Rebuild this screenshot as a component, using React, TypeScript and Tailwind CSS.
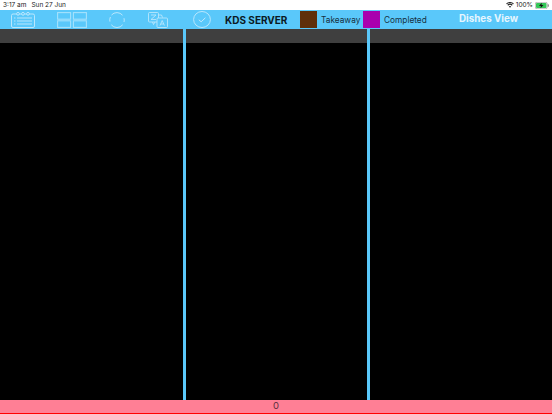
import React from "react";

const stroke = "#c4eafd";

function ListIcon() {
  return (
    <svg width="24" height="16" viewBox="0 0 24 16" fill="none" stroke={stroke} strokeWidth="0.9">
      <rect x="0.5" y="2" width="23" height="13.5" rx="1.5" />
      <circle cx="7" cy="1.8" r="1.4" fill="#5ac8fa" />
      <circle cx="12" cy="1.8" r="1.4" fill="#5ac8fa" />
      <circle cx="17" cy="1.8" r="1.4" fill="#5ac8fa" />
      <path d="M3 6h1.5M6 6h15M3 9h1.5M6 9h15M3 12h1.5M6 12h15" />
    </svg>
  );
}

function GridIcon() {
  return (
    <svg width="30" height="16" viewBox="0 0 30 16" fill="none" stroke="#a5e1fc" strokeWidth="1.1">
      <rect x="0.6" y="0.6" width="13" height="6.6" />
      <rect x="16.4" y="0.6" width="13" height="6.6" />
      <rect x="0.6" y="8.8" width="13" height="6.6" />
      <rect x="16.4" y="8.8" width="13" height="6.6" />
    </svg>
  );
}

function SyncIcon() {
  return (
    <svg width="16" height="16" viewBox="0 0 16 16" fill="none" stroke={stroke} strokeWidth="0.9">
      <path d="M2.5 3A7.3 7.3 0 0 1 13.5 3.2" />
      <path d="M13.7 12.8A7.3 7.3 0 0 1 2.3 12.8" />
      <path d="M0.9 9.6A7.3 7.3 0 0 1 1.4 5" />
      <path d="M15 6.2A7.3 7.3 0 0 1 15 10" />
    </svg>
  );
}

function TranslateIcon() {
  return (
    <svg width="20" height="16" viewBox="0 0 20 16" fill="none" stroke={stroke} strokeWidth="0.8">
      <rect x="0.5" y="0.5" width="10" height="9.5" rx="1" />
      <path d="M3 3h5L3 7.5h5" />
      <path d="M10.5 3h3l1 2.5" />
      <rect x="9" y="6" width="10.5" height="9.5" rx="1" fill="#5ac8fa" />
      <path d="M12 13.5L14.2 8.5l2.2 5M12.8 12h2.8" />
      <path d="M4.5 10l1 2.5L7 10" />
    </svg>
  );
}

function CheckIcon() {
  return (
    <svg width="18" height="17" viewBox="0 0 18 17" fill="none" stroke={stroke} strokeWidth="0.9">
      <ellipse cx="9" cy="8.5" rx="8.4" ry="8" />
      <path d="M5.8 8.8l2.4 2 4.2-4" strokeWidth="1" />
    </svg>
  );
}

function Wifi() {
  return (
    <svg width="8" height="6" viewBox="0 0 18 14" fill="#222">
      <path d="M9 13.5L6.3 10.5a4 4 0 0 1 5.4 0zM4.6 8.6L2.8 6.7a9 9 0 0 1 12.4 0l-1.8 1.9a6.5 6.5 0 0 0-8.8 0zM1.6 5.4L0 3.6a13 13 0 0 1 18 0l-1.6 1.8a10.6 10.6 0 0 0-14.8 0z" />
    </svg>
  );
}

function Battery() {
  return (
    <svg width="14" height="7" viewBox="0 0 28 14">
      <rect x="0.5" y="0.5" width="24" height="13" rx="3.5" fill="none" stroke="#777" />
      <rect x="2" y="2" width="21" height="10" rx="2" fill="#34c759" />
      <rect x="25.5" y="4.5" width="2" height="5" rx="1" fill="#777" />
      <path d="M13.5 1.5L8 8h4l-1 4.5L17 6h-4z" fill="#111" />
    </svg>
  );
}

function Column({ className }: { className: string }) {
  return (
    <div className={`${className} flex flex-col`}>
      <div className="h-[14px] bg-[#3f3f3f]" />
      <div className="flex-1 bg-black" />
    </div>
  );
}

export default function App() {
  return (
    <div
      className="w-[552px] h-[414px] flex flex-col overflow-hidden bg-black"
      style={{ fontFamily: '"Inter", "Liberation Sans", sans-serif' }}
    >
      <div className="h-[10px] bg-white flex items-center justify-between pl-[3px] pr-[3px] text-[6.5px] leading-none text-[#222]">
        <div className="flex gap-[5px]">
          <span>3:17 am</span>
          <span>Sun 27 Jun</span>
        </div>
        <div className="flex items-center gap-[2px]">
          <Wifi />
          <span>100%</span>
          <Battery />
        </div>
      </div>

      <div className="h-[19px] bg-[#5ac8fa] flex items-center">
        <div className="ml-[11px] flex"><ListIcon /></div>
        <div className="ml-[22px] flex"><GridIcon /></div>
        <div className="ml-[22px] flex"><SyncIcon /></div>
        <div className="ml-[23px] flex"><TranslateIcon /></div>
        <div className="ml-[25px] flex"><CheckIcon /></div>
        <span className="ml-[14px] mt-[1px] w-[75px] text-[10px] font-bold text-[#0b1a24] whitespace-nowrap">KDS SERVER</span>
        <div className="w-[17px] h-[17px] bg-[#5f2f0b]" />
        <span className="ml-[4px] mt-[2px] w-[42px] text-[8.3px] text-[#16303f] whitespace-nowrap">Takeaway</span>
        <div className="w-[17px] h-[17px] bg-[#a900ae]" />
        <span className="ml-[4px] mt-[2px] w-[75px] text-[8.3px] text-[#16303f] whitespace-nowrap">Completed</span>
        <span className="text-[9.8px] font-bold text-[#e6f6fe] whitespace-nowrap">Dishes View</span>
      </div>

      <div className="h-[371px] flex">
        <Column className="w-[183px]" />
        <div className="w-[2.5px] bg-[#5ac8fa]" />
        <Column className="w-[181.5px]" />
        <div className="w-[2.5px] bg-[#5ac8fa]" />
        <Column className="flex-1" />
      </div>

      <div className="h-[13px] bg-[#ff7f95] flex items-center justify-center text-[9.5px] text-[#5d3040]">0</div>
      <div className="h-[1px] bg-[#ff0000]" />
    </div>
  );
}
